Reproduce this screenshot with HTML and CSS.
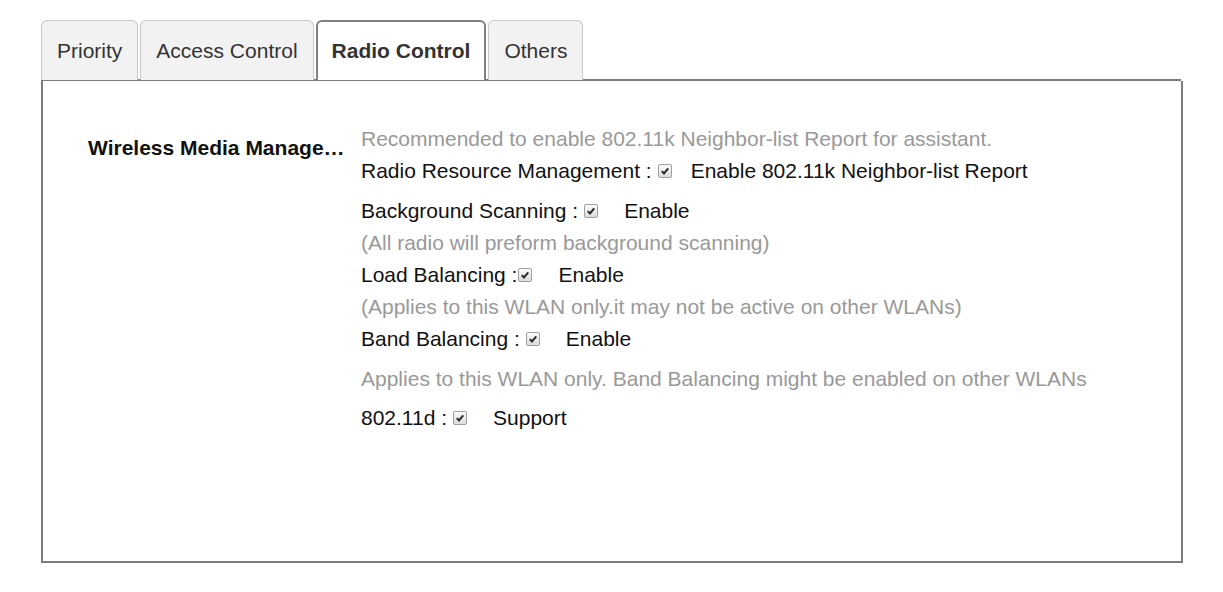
FILE: index.html
```html
<!DOCTYPE html>
<html>
<head>
<meta charset="utf-8">
<link rel="stylesheet" href="styles.css">
</head>
<body>
<div class="wrap">
  <div class="tabs">
    <div class="tab">Priority</div>
    <div class="tab">Access Control</div>
    <div class="tab active">Radio Control</div>
    <div class="tab">Others</div>
  </div>
  <div class="panel">
    <div class="label" title="Wireless Media Management">Wireless Media Manage…</div>
    <div class="fields">
      <div class="row hint">Recommended to enable 802.11k Neighbor-list Report for assistant.</div>
      <div class="row">Radio Resource Management :<span class="cb sp"><svg viewBox="0 0 13 13"><path d="M3 6.6 L5.4 9.2 L10 3.6" fill="none" stroke="#2a2a2a" stroke-width="2.2"/></svg></span><span class="opt first">Enable 802.11k Neighbor-list Report</span></div>
      <div class="row gap">Background Scanning :<span class="cb sp"><svg viewBox="0 0 13 13"><path d="M3 6.6 L5.4 9.2 L10 3.6" fill="none" stroke="#2a2a2a" stroke-width="2.2"/></svg></span><span class="opt">Enable</span></div>
      <div class="row hint">(All radio will preform background scanning)</div>
      <div class="row">Load Balancing :<span class="cb"><svg viewBox="0 0 13 13"><path d="M3 6.6 L5.4 9.2 L10 3.6" fill="none" stroke="#2a2a2a" stroke-width="2.2"/></svg></span><span class="opt">Enable</span></div>
      <div class="row hint">(Applies to this WLAN only.it may not be active on other WLANs)</div>
      <div class="row">Band Balancing :<span class="cb sp"><svg viewBox="0 0 13 13"><path d="M3 6.6 L5.4 9.2 L10 3.6" fill="none" stroke="#2a2a2a" stroke-width="2.2"/></svg></span><span class="opt">Enable</span></div>
      <div class="row hint gap">Applies to this WLAN only. Band Balancing might be enabled on other WLANs</div>
      <div class="row gap2">802.11d :<span class="cb sp"><svg viewBox="0 0 13 13"><path d="M3 6.6 L5.4 9.2 L10 3.6" fill="none" stroke="#2a2a2a" stroke-width="2.2"/></svg></span><span class="opt">Support</span></div>
    </div>
  </div>
</div>
</body>
</html>
```
FILE: styles.css
```css
html, body {
  margin: 0;
  padding: 0;
  background: #fff;
}
body {
  font-family: "Liberation Sans", Arial, sans-serif;
  font-size: 21px;
  color: #111;
}
.wrap {
  padding: 20px 0 0 41px;
  width: 1142px;
}
.tabs {
  display: flex;
  gap: 2px;
  border-bottom: 2px solid #7d7d7d;
  margin-right: 2px;
  height: 59px;
}
.tab {
  box-sizing: border-box;
  height: 60px;
  padding: 0 15px;
  line-height: 60px;
  background: #f2f2f2;
  border: 1px solid #c9c9c9;
  border-bottom: none;
  border-radius: 6px 6px 0 0;
  color: #333;
  white-space: nowrap;
}
.tab.active {
  background: #fff;
  border: 2px solid #808080;
  border-bottom: none;
  font-weight: bold;
  line-height: 58px;
  padding: 0 14px;
}
.panel {
  box-sizing: border-box;
  height: 482px;
  border: 2px solid #7d7d7d;
  border-top: none;
  display: flex;
  padding: 42px 0 0 45px;
}
.label {
  width: 253px;
  flex: none;
  margin-right: 20px;
  padding-top: 9px;
  font-weight: bold;
  white-space: nowrap;
  line-height: 32px;
  color: #111;
}
.fields {
  display: flex;
  flex-direction: column;
}
.row {
  line-height: 32px;
  height: 32px;
  white-space: nowrap;
  display: flex;
  align-items: center;
}
.row.gap { margin-top: 8px; }
.row.gap2 { margin-top: 7px; }
.hint { color: #999; }
.cb {
  box-sizing: border-box;
  width: 14px;
  height: 14px;
  border: 1px solid #a0a0a0;
  border-radius: 2px;
  background: linear-gradient(#fbfbfb, #dcdcdc);
  display: inline-flex;
  margin-left: 1px;
}
.cb.sp { margin-left: 6px; }
.cb svg {
  width: 12px;
  height: 12px;
}
.opt { margin-left: 26px; }
.opt.first { margin-left: 19px; }
```
